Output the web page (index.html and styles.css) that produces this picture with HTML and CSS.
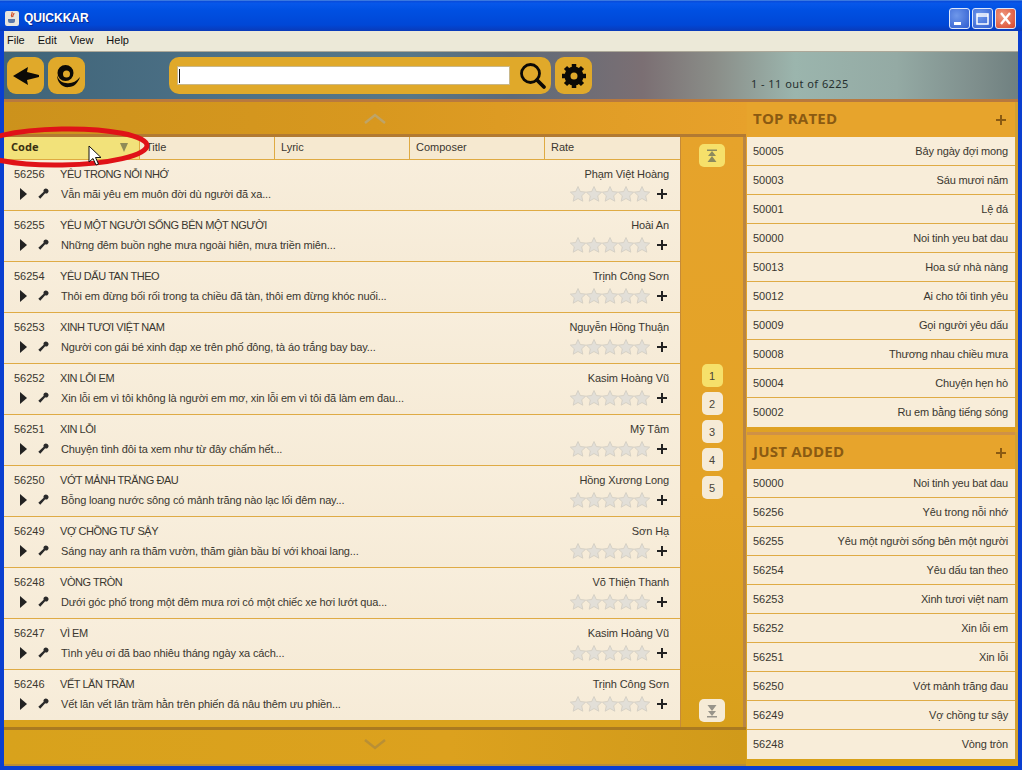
FILE: index.html
```html
<!DOCTYPE html>
<html lang="vi">
<head>
<meta charset="utf-8">
<title>QUICKKAR</title>
<link rel="stylesheet" href="styles.css">
</head>
<body>
<svg class="defs" width="0" height="0">
<defs>
<symbol id="star" viewBox="0 0 16 16"><path d="M8 .5l2.3 5 5.4.6-4 3.700 1.100 5.400L8 12.500l-4.800 2.700 1.100-5.400-4-3.700 5.400-.6z" fill="#e2dfd8" stroke="#d0ccc0" stroke-width=".8"/></symbol>
<symbol id="stars" viewBox="0 0 80 16"><use href="#star" x="0" width="16" height="16"/><use href="#star" x="16" width="16" height="16"/><use href="#star" x="32" width="16" height="16"/><use href="#star" x="48" width="16" height="16"/><use href="#star" x="64" width="16" height="16"/></symbol>
<symbol id="play" viewBox="0 0 9 12"><path d="M1 0l7 6-7 6z" fill="#222"/></symbol>
<symbol id="mic" viewBox="0 0 11 11"><path d="M6.500 1.200a2.200 2.200 0 0 1 3.300 3.300 2.200 2.200 0 0 1-2.300.4L3 9.800 1.200 8l4.900-4.500a2.200 2.200 0 0 1 .4-2.300z" fill="#2a2a2a"/></symbol>
<symbol id="plus" viewBox="0 0 10 10"><path d="M4 0h2v4h4v2H6v4H4V6H0V4h4z" fill="currentColor"/></symbol>
</defs>
</svg>
<div class="window">
  <header class="titlebar">
    <span class="appicon"><svg width="14" height="14" viewBox="0 0 14 14"><path d="M7 1c1 2-2 3 0 5M9 2c0 2-2 2-1 4" stroke="#d2502a" stroke-width="1.200" fill="none"/><path d="M3 8h7v2a2 2 0 0 1-2 2H5a2 2 0 0 1-2-2z" fill="#5a78a8"/></svg></span>
    <span class="apptitle">QUICKKAR</span>
    <span class="winbtns">
      <span class="winbtn"><svg width="21" height="21" viewBox="0 0 21 21"><rect x="5" y="14" width="7" height="3" fill="#fff"/></svg></span>
      <span class="winbtn"><svg width="21" height="21" viewBox="0 0 21 21"><path d="M5 6h11v10H5zM5 6v2h11V6" fill="none" stroke="#fff" stroke-width="1.500"/></svg></span>
      <span class="winbtn close"><svg width="21" height="21" viewBox="0 0 21 21"><path d="M6 5l9 11M15 5L6 16" stroke="#fff" stroke-width="2.400"/></svg></span>
    </span>
  </header>
  <nav class="menubar"><span>File</span><span>Edit</span><span>View</span><span>Help</span></nav>
  <div class="toolbar">
    <div class="tbtn"><svg width="26" height="22" viewBox="0 0 26 22"><path d="M0 11L15 2l-1 5 12 3v2l-12 3 1 5z" fill="#0c0a06"/></svg></div>
    <div class="tbtn"><svg width="26" height="26" viewBox="0 0 26 26"><path fill-rule="evenodd" d="M11.500 2a8 8 0 1 0 0 16 8 8 0 0 0 0-16zm1 5.500a3.500 3.500 0 1 1 0 7 3.500 3.500 0 0 1 0-7z" fill="#0c0a06"/><path d="M3 12c0 8 6 13 12 12 5 0 9-4 11-10-4 5-9 7-14 6-5 0-8-4-9-8z" fill="#0c0a06"/></svg></div>
    <div class="searchbar">
      <div class="searchfield"><span class="caret"></span></div>
      <svg class="searchicon" width="28" height="28" viewBox="0 0 28 28"><circle cx="11.500" cy="11.500" r="9" fill="none" stroke="#0c0a06" stroke-width="2.800"/><path d="M18 18l7 7" stroke="#0c0a06" stroke-width="3.800" stroke-linecap="round"/></svg>
    </div>
    <div class="tbtn gear"><svg width="26" height="26" viewBox="0 0 26 26"><circle cx="13" cy="13" r="6.500" fill="none" stroke="#0c0a06" stroke-width="6"/><g stroke="#0c0a06" stroke-width="4.500"><path d="M13 1v5M13 20v5M1 13h5M20 13h5M4.500 4.500l3.500 3.500M18 18l3.500 3.500M4.500 21.500L8 18M18 8l3.500-3.500"/></g></svg></div>
    <div class="counter">1 - 11 out of 6225</div>
  </div>
  <main class="content">
    <section class="leftcol">
      <div class="pagebar"><svg width="24" height="12" viewBox="0 0 24 12"><path d="M2 11l10-8 10 8" fill="none" stroke="#bea468" stroke-width="2.500"/></svg></div>
      <div class="tablewrap">
        <div class="table">
          <div class="thead">
            <div class="th sorted"><b>Code</b><span class="sortarrow"></span></div>
            <div class="th">Title</div><div class="th">Lyric</div><div class="th">Composer</div><div class="th last">Rate</div>
          </div>
          <div class="rows">
            <div class="row"><div class="line"><span class="code">56256</span><span class="title">YÊU TRONG NỖI NHỚ</span><span class="composer">Phạm Việt Hoàng</span></div><div class="line"><svg class="i-play"><use href="#play"/></svg><svg class="i-mic"><use href="#mic"/></svg><span class="lyric">Vẫn mãi yêu em muôn đời dù người đã xa...</span><svg class="i-stars"><use href="#stars"/></svg><svg class="i-plus"><use href="#plus"/></svg></div></div>
            <div class="row"><div class="line"><span class="code">56255</span><span class="title">YÊU MỘT NGƯỜI SỐNG BÊN MỘT NGƯỜI</span><span class="composer">Hoài An</span></div><div class="line"><svg class="i-play"><use href="#play"/></svg><svg class="i-mic"><use href="#mic"/></svg><span class="lyric">Những đêm buồn nghe mưa ngoài hiên, mưa triền miên...</span><svg class="i-stars"><use href="#stars"/></svg><svg class="i-plus"><use href="#plus"/></svg></div></div>
            <div class="row"><div class="line"><span class="code">56254</span><span class="title">YÊU DẤU TAN THEO</span><span class="composer">Trịnh Công Sơn</span></div><div class="line"><svg class="i-play"><use href="#play"/></svg><svg class="i-mic"><use href="#mic"/></svg><span class="lyric">Thôi em đừng bối rối trong ta chiều đã tàn, thôi em đừng khóc nuối...</span><svg class="i-stars"><use href="#stars"/></svg><svg class="i-plus"><use href="#plus"/></svg></div></div>
            <div class="row"><div class="line"><span class="code">56253</span><span class="title">XINH TƯƠI VIỆT NAM</span><span class="composer">Nguyễn Hồng Thuận</span></div><div class="line"><svg class="i-play"><use href="#play"/></svg><svg class="i-mic"><use href="#mic"/></svg><span class="lyric">Người con gái bé xinh đạp xe trên phố đông, tà áo trắng bay bay...</span><svg class="i-stars"><use href="#stars"/></svg><svg class="i-plus"><use href="#plus"/></svg></div></div>
            <div class="row"><div class="line"><span class="code">56252</span><span class="title">XIN LỖI EM</span><span class="composer">Kasim Hoàng Vũ</span></div><div class="line"><svg class="i-play"><use href="#play"/></svg><svg class="i-mic"><use href="#mic"/></svg><span class="lyric">Xin lỗi em vì tôi không là người em mơ, xin lỗi em vì tôi đã làm em đau...</span><svg class="i-stars"><use href="#stars"/></svg><svg class="i-plus"><use href="#plus"/></svg></div></div>
            <div class="row"><div class="line"><span class="code">56251</span><span class="title">XIN LỖI</span><span class="composer">Mỹ Tâm</span></div><div class="line"><svg class="i-play"><use href="#play"/></svg><svg class="i-mic"><use href="#mic"/></svg><span class="lyric">Chuyện tình đôi ta xem như từ đây chấm hết...</span><svg class="i-stars"><use href="#stars"/></svg><svg class="i-plus"><use href="#plus"/></svg></div></div>
            <div class="row"><div class="line"><span class="code">56250</span><span class="title">VỚT MẢNH TRĂNG ĐAU</span><span class="composer">Hồng Xương Long</span></div><div class="line"><svg class="i-play"><use href="#play"/></svg><svg class="i-mic"><use href="#mic"/></svg><span class="lyric">Bỗng loang nước sông có mảnh trăng nào lạc lối đêm nay...</span><svg class="i-stars"><use href="#stars"/></svg><svg class="i-plus"><use href="#plus"/></svg></div></div>
            <div class="row"><div class="line"><span class="code">56249</span><span class="title">VỢ CHỒNG TƯ SẬY</span><span class="composer">Sơn Hạ</span></div><div class="line"><svg class="i-play"><use href="#play"/></svg><svg class="i-mic"><use href="#mic"/></svg><span class="lyric">Sáng nay anh ra thăm vườn, thăm giàn bầu bí với khoai lang...</span><svg class="i-stars"><use href="#stars"/></svg><svg class="i-plus"><use href="#plus"/></svg></div></div>
            <div class="row"><div class="line"><span class="code">56248</span><span class="title">VÒNG TRÒN</span><span class="composer">Võ Thiện Thanh</span></div><div class="line"><svg class="i-play"><use href="#play"/></svg><svg class="i-mic"><use href="#mic"/></svg><span class="lyric">Dưới góc phố trong một đêm mưa rơi có một chiếc xe hơi lướt qua...</span><svg class="i-stars"><use href="#stars"/></svg><svg class="i-plus"><use href="#plus"/></svg></div></div>
            <div class="row"><div class="line"><span class="code">56247</span><span class="title">VÌ EM</span><span class="composer">Kasim Hoàng Vũ</span></div><div class="line"><svg class="i-play"><use href="#play"/></svg><svg class="i-mic"><use href="#mic"/></svg><span class="lyric">Tình yêu ơi đã bao nhiêu tháng ngày xa cách...</span><svg class="i-stars"><use href="#stars"/></svg><svg class="i-plus"><use href="#plus"/></svg></div></div>
            <div class="row end"><div class="line"><span class="code">56246</span><span class="title">VẾT LĂN TRẦM</span><span class="composer">Trịnh Công Sơn</span></div><div class="line"><svg class="i-play"><use href="#play"/></svg><svg class="i-mic"><use href="#mic"/></svg><span class="lyric">Vết lăn vết lăn trầm hằn trên phiến đá nâu thêm ưu phiền...</span><svg class="i-stars"><use href="#stars"/></svg><svg class="i-plus"><use href="#plus"/></svg></div></div>
          </div>
        </div>
        <aside class="pager">
          <div class="pgbtn first"><svg width="12" height="14" viewBox="0 0 12 14"><path d="M1 .5h10v1.500H1zM6 2l4 5H2zM6 7l4.500 6h-9z" fill="#8c8a5e"/></svg></div>
          <div class="pages">
            <div class="pgbtn active">1</div><div class="pgbtn">2</div><div class="pgbtn">3</div><div class="pgbtn">4</div><div class="pgbtn">5</div>
          </div>
          <div class="pgbtn lastbtn"><svg width="12" height="14" viewBox="0 0 12 14"><path d="M1 12h10v1.500H1zM6 12l4-5H2zM6 7l4.500-6h-9z" fill="#98948a"/></svg></div>
        </aside>
      </div>
      <div class="pagebar bottom"><svg width="24" height="12" viewBox="0 0 24 12"><path d="M2 1l10 8 10-8" fill="none" stroke="#b98f35" stroke-width="2.500"/></svg></div>
    </section>
    <section class="rightcol">
      <div class="panel">
        <h2 class="panelhead">TOP RATED<svg class="panelplus"><use href="#plus"/></svg></h2>
        <ul class="plist">
          <li><span>50005</span><span>Bảy ngày đợi mong</span></li>
          <li><span>50003</span><span>Sáu mươi năm</span></li>
          <li><span>50001</span><span>Lệ đá</span></li>
          <li><span>50000</span><span>Noi tinh yeu bat dau</span></li>
          <li><span>50013</span><span>Hoa sứ nhà nàng</span></li>
          <li><span>50012</span><span>Ai cho tôi tình yêu</span></li>
          <li><span>50009</span><span>Gọi người yêu dấu</span></li>
          <li><span>50008</span><span>Thương nhau chiều mưa</span></li>
          <li><span>50004</span><span>Chuyện hẹn hò</span></li>
          <li><span>50002</span><span>Ru em bằng tiếng sóng</span></li>
        </ul>
      </div>
      <div class="panel">
        <h2 class="panelhead">JUST ADDED<svg class="panelplus"><use href="#plus"/></svg></h2>
        <ul class="plist">
          <li><span>50000</span><span>Noi tinh yeu bat dau</span></li>
          <li><span>56256</span><span>Yêu trong nỗi nhớ</span></li>
          <li><span>56255</span><span>Yêu một người sống bên một người</span></li>
          <li><span>56254</span><span>Yêu dấu tan theo</span></li>
          <li><span>56253</span><span>Xinh tươi việt nam</span></li>
          <li><span>56252</span><span>Xin lỗi em</span></li>
          <li><span>56251</span><span>Xin lỗi</span></li>
          <li><span>56250</span><span>Vớt mảnh trăng đau</span></li>
          <li><span>56249</span><span>Vợ chồng tư sậy</span></li>
          <li><span>56248</span><span>Vòng tròn</span></li>
        </ul>
      </div>
    </section>
  </main>
  <svg class="annotation" width="152" height="48" viewBox="0 0 152 48"><ellipse cx="62" cy="21" rx="85" ry="18" fill="none" stroke="#e01218" stroke-width="5" transform="rotate(-1 62 21)"/></svg>
  <svg class="cursor" width="14" height="21" viewBox="0 0 14 21"><path d="M1 1v16l4-3.500 3 6.500 2.500-1-3-6.500h5.500z" fill="#fff" stroke="#111" stroke-width="1"/></svg>
</div>
</body>
</html>
```
FILE: styles.css
```css
* { box-sizing: border-box; }
html, body { margin: 0; padding: 0; }
body { width: 1022px; height: 770px; overflow: hidden; font-family: "Liberation Sans", "Noto Sans", sans-serif; font-size: 11px; color: #2b2822; }
.defs { position: absolute; }
.window { position: relative; width: 1022px; height: 770px; display: flex; flex-direction: column; background: #0a3fd0; padding: 0 4px 4px 4px; }
.titlebar { height: 31px; margin: 0 -4px; padding: 4px 4px 0 4px; display: flex; align-items: center; background: linear-gradient(#0a4ad8 0, #0757ea 8%, #0050e2 30%, #0047d6 80%, #0a3ab8 100%); border-top: 1px solid #3a78e0; }
.appicon { width: 14px; height: 15px; background: #e8e6de; border-radius: 2px; margin-left: 1px; display: flex; align-items: center; }
.apptitle { margin-left: 5px; font: bold 12px "Liberation Sans", sans-serif; color: #fff; text-shadow: 1px 1px 0 #0a2a90; }
.winbtns { margin-left: auto; display: flex; gap: 2px; padding-right: 2px; }
.winbtn { width: 21px; height: 21px; border: 1px solid #dfe8fa; border-radius: 3px; background: radial-gradient(circle at 35% 35%, #6f98ea, #2f5cd0); display: flex; align-items: center; justify-content: center; overflow: hidden; }
.winbtn svg { flex: none; }
.close { background: radial-gradient(circle at 35% 35%, #f09a80, #d8452a); }
.menubar { height: 21px; display: flex; align-items: center; background: #ece9d8; border-bottom: 1px solid #aca899; padding: 0 0 3px 3px; color: #111; }
.menubar span { margin-right: 13px; }
.toolbar { height: 50px; flex: none; display: flex; align-items: flex-start; padding: 5px 0 0 3px; background: linear-gradient(90deg, #3f6478 0%, #4d7187 22%, #577788 40%, #5e6a78 50%, #7b6f73 63%, #8a8d88 70%, #9bb5ad 78%, #94aaa4 88%, #7e8e8c 96%, #6f8080 100%); border-bottom: 3px solid #b8793f; }
.tbtn { width: 37px; height: 37px; border-radius: 9px; background: #e0a92a; display: flex; align-items: center; justify-content: center; margin-right: 4px; }
.searchbar { width: 382px; height: 37px; margin-left: 80px; margin-right: 4px; border-radius: 10px; background: #e0a92a; display: flex; align-items: center; padding-left: 8px; }
.searchfield { width: 333px; height: 19px; background: #fff; border: 1px solid #c9b88a; display: flex; align-items: center; padding-left: 1px; }
.caret { width: 1px; height: 14px; background: #111; }
.searchicon { margin-left: 9px; }
.gear { margin-right: 0; }
.counter { margin-left: 159px; margin-top: 19px; font: 11px "Noto Sans", sans-serif; letter-spacing: .45px; color: #26302f; }
.content { flex: 1; min-height: 0; display: flex; background: linear-gradient(#e7a22b, #d8a21c); }
.leftcol { width: 742px; display: flex; flex-direction: column; }
.pagebar { height: 35px; flex: none; display: flex; align-items: center; justify-content: center; background: linear-gradient(90deg, #cc921c, #d8981f 50%, #e7a12b); border-bottom: 3px solid #b27a32; }
.pagebar.bottom { height: 39px; padding-bottom: 4px; background: linear-gradient(90deg, #d8a21c, #dca11e 60%, #d09a1a); border-top: 3px solid #aa7a20; border-bottom: 2px solid #b98e38; }
.tablewrap { flex: 1; min-height: 0; display: flex; }
.table { width: 676px; display: flex; flex-direction: column; }
.thead { height: 23px; display: grid; grid-template-columns: 136px 135px 135px 135px 135px; background: #f6e9d0; border-bottom: 1px solid #dfaa42; }
.th { padding-left: 6px; line-height: 21px; border-right: 1px solid #dfaa42; color: #3b3730; }
.th.last { border-right: 0; padding-left: 6px; }
.th.sorted { position: relative; background: #f2e27a; padding-left: 7px; color: #3a3112; }
.th.sorted b { font: bold 11px "Noto Sans", sans-serif; }
.sortarrow { position: absolute; left: 116px; top: 6px; border-left: 4.500px solid transparent; border-right: 4.500px solid transparent; border-top: 9px solid #8f8c57; }
.rows { flex: 1; display: flex; flex-direction: column; }
.row { height: 51px; flex: none; padding: 0 10px; border-bottom: 1px solid #dfab45; background: linear-gradient(#f8eedc, #f6ebd7); }
.row.end { border-bottom: 0; height: 50px; }
.line { height: 20px; display: flex; align-items: center; }
.line:first-child { margin-top: 3px; height: 21px; }
.code { width: 46px; color: #3a372f; }
.title { color: #3a372f; letter-spacing: -.45px; }
.composer { margin-left: auto; color: #3a372f; padding-right: 1px; letter-spacing: -.1px; }
.i-play { width: 9px; height: 12px; margin-left: 5px; }
.i-mic { width: 12px; height: 12px; margin-left: 9px; }
.lyric { margin-left: 12px; color: #3a372f; letter-spacing: -.14px; }
.i-stars { width: 80px; height: 16px; margin-left: auto; }
.i-plus { width: 10px; height: 10px; margin-left: 7px; margin-right: 3px; color: #222; }
.pager { width: 66px; display: flex; flex-direction: column; align-items: center; padding: 7px 0 5px 0; background: linear-gradient(#e6a32b, #e3a326 60%, #d8a01c); border-left: 1px solid #c58a38; border-right: 3px solid #b98544; }
.pgbtn { width: 21px; height: 23px; border-radius: 5px; display: flex; align-items: center; justify-content: center; background: #f6ebd6; color: #4a4538; font-size: 11px; flex: none; }
.pgbtn.active, .pgbtn.first { background: #f6e06a; }
.pgbtn.first, .pgbtn.lastbtn { width: 26px; height: 23px; }
.pgbtn.lastbtn { margin-top: auto; }
.pages { display: flex; flex-direction: column; gap: 5px; margin-top: 197px; }
.rightcol { width: 272px; display: flex; flex-direction: column; gap: 5px; padding-left: 1px; }
.panel { display: flex; flex-direction: column; border-right: 3px solid #d2a030; }
.panelhead { position: relative; height: 35px; margin: 0; padding: 0 0 3px 6px; display: flex; align-items: center; font: bold 15px "Open Sans", "Noto Sans", sans-serif; color: #8a5a12; letter-spacing: .2px; background: #e7a42c; }
.panel + .panel .panelhead { height: 37px; padding-bottom: 2px; border-top: 3px solid #cf9146; }
.panelplus { position: absolute; right: 9px; top: 13px; width: 10px; height: 10px; color: #8a5a12; }
.plist { list-style: none; margin: 0; padding: 0; background: #f8edd9; }
.plist li { height: 29px; padding: 0 7px 1px 6px; display: flex; justify-content: space-between; align-items: center; border-bottom: 1px solid #dfab45; color: #3a372f; }
.plist li span:last-child { letter-spacing: -.15px; }
.plist li:last-child { border-bottom: 0; }
.annotation { position: absolute; left: 0; top: 126px; overflow: hidden; }
.cursor { position: absolute; left: 88px; top: 145px; }
```
